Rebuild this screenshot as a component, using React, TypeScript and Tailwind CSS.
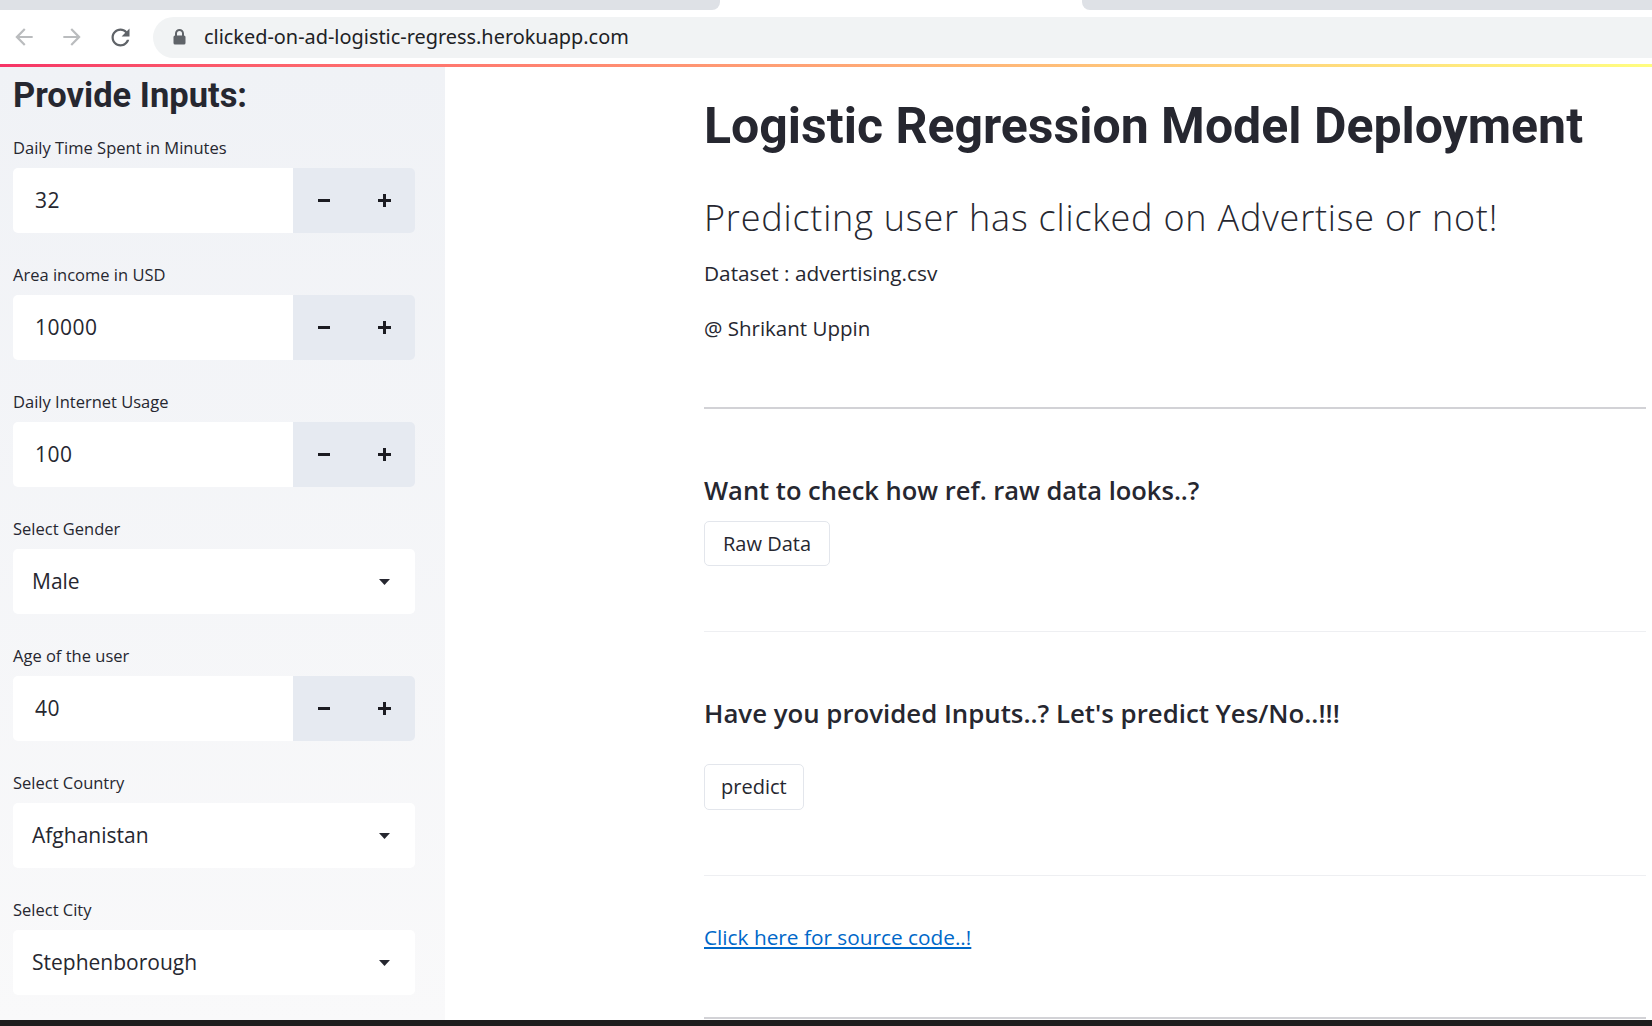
import React from "react";

const openSans = "font-['Open_Sans',sans-serif]";

function Stepper({ label, value }: { label: string; value: string }) {
  return (
    <div>
      <div className="h-[22px] mb-[9px] text-[16.5px] leading-[22px] text-[#262730]">{label}</div>
      <div className="flex h-[65px] mb-[31px] rounded-[5px] overflow-hidden">
        <div className="flex-1 bg-white flex items-center pl-[22px] text-[21px] tracking-[0.5px] text-[#262730]">
          {value}
        </div>
        <div className="w-[122px] bg-[#e6eaf1] flex items-center">
          <div className="w-[61px] flex justify-center">
            <div className="w-[12px] h-[3px] bg-[#1c1c22]" />
          </div>
          <div className="w-[61px] flex justify-center">
            <svg width="13" height="13" viewBox="0 0 13 13">
              <rect x="0" y="5" width="13" height="3" fill="#1c1c22" />
              <rect x="5" y="0" width="3" height="13" fill="#1c1c22" />
            </svg>
          </div>
        </div>
      </div>
    </div>
  );
}

function Select({ label, value }: { label: string; value: string }) {
  return (
    <div>
      <div className="h-[22px] mb-[9px] text-[16.5px] leading-[22px] text-[#262730]">{label}</div>
      <div className="flex h-[65px] mb-[31px] rounded-[5px] bg-white items-center pl-[19px] pr-[25px] text-[21px] text-[#262730]">
        <span className="flex-1">{value}</span>
        <svg width="11" height="6" viewBox="0 0 11 6">
          <path d="M0 0 L11 0 L5.5 6 Z" fill="#262730" />
        </svg>
      </div>
    </div>
  );
}

export default function App() {
  return (
    <div className={`w-[1652px] h-[1026px] flex flex-col overflow-hidden bg-white ${openSans}`}>
      {/* tab strip */}
      <div className="h-[10px] flex bg-white">
        <div className="w-[720px] bg-[#dee1e6] rounded-br-[8px]" />
        <div className="w-[362px]" />
        <div className="flex-1 bg-[#dee1e6] rounded-bl-[8px]" />
      </div>

      {/* toolbar */}
      <div className="h-[54px] flex items-center bg-white">
        <div className="w-[48px] flex justify-center">
          <svg width="26" height="26" viewBox="0 0 24 24">
            <path d="M20 11H7.83l5.59-5.59L12 4l-8 8 8 8 1.41-1.41L7.83 13H20v-2z" fill="#babcbe" />
          </svg>
        </div>
        <div className="w-[48px] flex justify-center">
          <svg width="26" height="26" viewBox="0 0 24 24">
            <path d="M12 4l-1.41 1.41L16.17 11H4v2h12.17l-5.58 5.59L12 20l8-8z" fill="#babcbe" />
          </svg>
        </div>
        <div className="w-[48px] flex justify-center">
          <svg width="27" height="27" viewBox="0 0 24 24">
            <path
              d="M17.65 6.35C16.2 4.9 14.21 4 12 4c-4.42 0-7.990 3.58-7.99 8s3.57 8 7.99 8c3.73 0 6.84-2.55 7.73-6h-2.08c-.82 2.33-3.04 4-5.65 4-3.310 0-6-2.69-6-6s2.69-6 6-6c1.66 0 3.14.69 4.22 1.78L13 11h7V4l-2.35 2.35z"
              fill="#5f6368"
            />
          </svg>
        </div>
        <div className="ml-[9px] flex-1 h-[41px] bg-[#f1f3f4] rounded-l-full flex items-center pl-[20px]">
          <svg width="13" height="16" viewBox="0 0 13 16">
            <path d="M3 7V4.5a3.5 3.5 0 0 1 7 0V7" stroke="#5f6368" strokeWidth="2" fill="none" />
            <rect x="0.5" y="6.5" width="12" height="9" rx="1.5" fill="#5f6368" />
          </svg>
          <span className="ml-[18px] font-['Noto_Sans',sans-serif] text-[19.9px] text-[#202124]">
            clicked-on-ad-logistic-regress.herokuapp.com
          </span>
        </div>
      </div>

      {/* streamlit decoration */}
      <div className="h-[3px] bg-linear-to-r from-[#f63366] to-[#fffd80]" />

      {/* page */}
      <div className="flex-1 flex min-h-0">
        <aside className="w-[445px] bg-linear-to-b from-[#f0f2f6] to-[#f9f9fa] pl-[13px] pr-[30px] pt-[8px]">
          <h1 className="h-[40px] mb-[22px] font-['Roboto',sans-serif] font-bold text-[34.5px] leading-[40px] text-[#262730]">
            Provide Inputs:
          </h1>
          <Stepper label="Daily Time Spent in Minutes" value="32" />
          <Stepper label="Area income in USD" value="10000" />
          <Stepper label="Daily Internet Usage" value="100" />
          <Select label="Select Gender" value="Male" />
          <Stepper label="Age of the user" value="40" />
          <Select label="Select Country" value="Afghanistan" />
          <Select label="Select City" value="Stephenborough" />
        </aside>

        <main className="flex-1 pl-[259px] pr-[6px] pt-[29px] text-[#262730]">
          <h1 className="h-[60px] font-['Roboto',sans-serif] font-bold text-[50px] leading-[60px] whitespace-nowrap">
            Logistic Regression Model Deployment
          </h1>
          <h2 className="mt-[38px] h-[48px] font-light text-[36px] tracking-[0.8px] leading-[48px] whitespace-nowrap">
            Predicting user has clicked on Advertise or not!
          </h2>
          <p className="mt-[17px] h-[28px] text-[20.8px] leading-[28px]">Dataset : advertising.csv</p>
          <p className="mt-[27px] h-[28px] text-[20.5px] leading-[28px]">@ Shrikant Uppin</p>
          <div className="mt-[65px] h-[2px] bg-[#d2d2d6]" />

          <h3 className="mt-[64px] h-[34px] font-semibold text-[25.5px] leading-[34px] whitespace-nowrap">
            Want to check how ref. raw data looks..?
          </h3>
          <button className="mt-[14px] h-[45px] px-[18px] border border-[#e3e6ec] rounded-[5px] bg-white text-[20px]">
            Raw Data
          </button>
          <div className="mt-[65px] h-px bg-[#eeeff2]" />

          <h3 className="mt-[64px] h-[34px] font-semibold text-[25.8px] leading-[34px] whitespace-nowrap">
            Have you provided Inputs..? Let's predict Yes/No..!!!
          </h3>
          <button className="mt-[34px] h-[46px] px-[16px] border border-[#e3e6ec] rounded-[5px] bg-white text-[20px]">
            predict
          </button>
          <div className="mt-[65px] h-px bg-[#eeeff2]" />

          <p className="mt-[47px] h-[28px] text-[20.8px] leading-[28px]">
            <a href="#" className="text-[#0068c9] underline">
              Click here for source code..!
            </a>
          </p>
          <div className="mt-[66px] h-[2px] bg-[#d2d2d6]" />
        </main>
      </div>

      <div className="h-[6px] bg-[#1e1e1e]" />
    </div>
  );
}
